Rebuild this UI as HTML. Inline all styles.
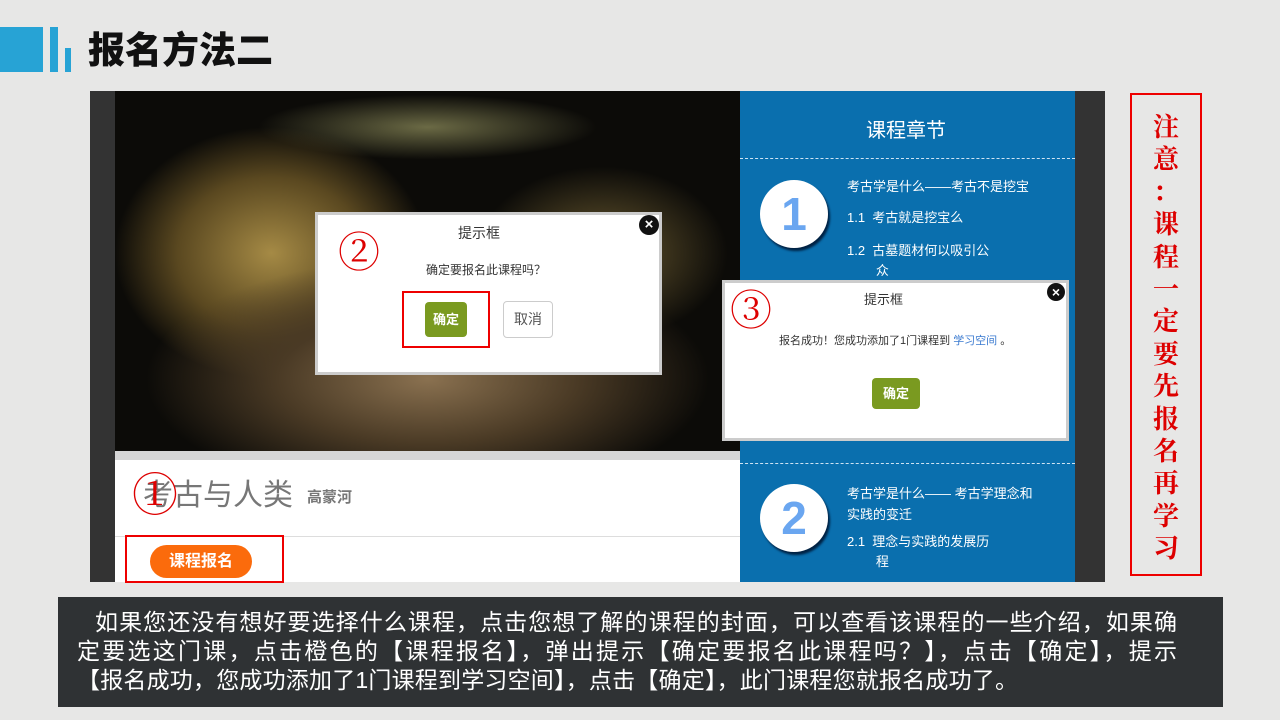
<!DOCTYPE html>
<html><head><meta charset="utf-8"><style>
*{margin:0;padding:0;box-sizing:border-box}
body{width:1280px;height:720px;background:#e7e7e6;position:relative;overflow:hidden;font-family:"Liberation Sans","Noto Sans CJK SC",sans-serif}
.a{position:absolute}
.c{font-family:"Noto Serif CJK SC",serif;color:#d00}
.l{position:absolute;font-size:23px;color:#fff;line-height:29px;white-space:nowrap;text-align:justify;text-align-last:justify}
</style></head><body>
<div class="a" style="left:0;top:27px;width:43px;height:45px;background:#27a3d5"></div>
<div class="a" style="left:50px;top:27px;width:8px;height:45px;background:#27a3d5"></div>
<div class="a" style="left:65px;top:48px;width:6px;height:24px;background:#27a3d5"></div>
<div class="a" style="left:88px;top:27px;font-size:37px;font-weight:900;color:#111;line-height:48px">报名方法二</div>

<div class="a" style="left:90px;top:91px;width:1015px;height:491px;background:#333"></div>
<div class="a" style="left:115px;top:91px;width:625px;height:360px;background:radial-gradient(ellipse 60% 45% at 50% 80%,#8a7150 0%,#4a3a25 40%,transparent 75%),radial-gradient(ellipse 25% 35% at 25% 45%,#a58a45,#5a4820 60%,transparent 100%),radial-gradient(ellipse 25% 30% at 78% 45%,#6a5a30,transparent 80%),radial-gradient(ellipse 30% 10% at 50% 10%,#6b6a45,transparent 90%),#0c0b08"></div>
<div class="a" style="left:115px;top:451px;width:625px;height:9px;background:#d6d6d6"></div>
<div class="a" style="left:115px;top:460px;width:625px;height:122px;background:#fff"></div>
<div class="a" style="left:115px;top:536px;width:625px;height:1px;background:#ddd"></div>
<div class="a" style="left:143px;top:470px;font-size:30px;color:#777">考古与人类</div>
<div class="a" style="left:307px;top:486px;font-size:15px;color:#777;font-weight:bold">高蒙河</div>
<div class="a c" style="left:132px;top:466px;font-size:46px;line-height:52px">①</div>
<div class="a" style="left:150px;top:545px;width:102px;height:33px;border-radius:17px;background:#fb6b0c;color:#fff;font-weight:bold;font-size:16px;text-align:center;line-height:33px">课程报名</div>
<div class="a" style="left:125px;top:535px;width:159px;height:48px;border:2px solid #e00"></div>

<div class="a" style="left:740px;top:91px;width:335px;height:491px;background:#0a6fae"></div>
<div class="a" style="left:866px;top:114px;font-size:20px;color:#fff">课程章节</div>
<div class="a" style="left:740px;top:158px;width:335px;border-top:1px dashed #cfe3f3"></div>
<div class="a" style="left:740px;top:463px;width:335px;border-top:1px dashed #cfe3f3"></div>
<div class="a" style="left:760px;top:180px;width:68px;height:68px;border-radius:50%;background:#fff;box-shadow:2px 3px 2px #024;color:#6aa6f0;font-size:46px;font-weight:bold;text-align:center;line-height:68px">1</div>
<div class="a" style="left:760px;top:484px;width:68px;height:68px;border-radius:50%;background:#fff;box-shadow:2px 3px 2px #024;color:#6aa6f0;font-size:46px;font-weight:bold;text-align:center;line-height:68px">2</div>
<div class="a" style="left:847px;top:178px;font-size:13px;color:#fff;line-height:18px">考古学是什么——考古不是挖宝</div>
<div class="a" style="left:847px;top:207px;font-size:13px;color:#fff">1.1&nbsp;&nbsp;考古就是挖宝么</div>
<div class="a" style="left:847px;top:241px;font-size:13px;color:#fff;line-height:20px">1.2&nbsp;&nbsp;古墓题材何以吸引公<br>&nbsp;&nbsp;&nbsp;&nbsp;&nbsp;&nbsp;&nbsp;&nbsp;众</div>
<div class="a" style="left:847px;top:483px;font-size:13px;color:#fff;line-height:21px">考古学是什么—— 考古学理念和<br>实践的变迁</div>
<div class="a" style="left:847px;top:532px;font-size:13px;color:#fff;line-height:20px">2.1&nbsp;&nbsp;理念与实践的发展历<br>&nbsp;&nbsp;&nbsp;&nbsp;&nbsp;&nbsp;&nbsp;&nbsp;程</div>
<div class="a" style="left:1075px;top:91px;width:30px;height:491px;background:#333"></div>

<div class="a" style="left:315px;top:212px;width:347px;height:163px;background:#fff;border:3px solid #ccc"></div>
<div class="a" style="left:458px;top:223px;font-size:14px;color:#333">提示框</div>
<div class="a" style="left:639px;top:215px;width:20px;height:20px;border-radius:50%;background:#111;color:#fff;font-size:15px;font-weight:bold;text-align:center;line-height:20px">×</div>
<div class="a c" style="left:338px;top:225px;font-size:42px;line-height:50px">②</div>
<div class="a" style="left:426px;top:261px;font-size:12px;color:#333">确定要报名此课程吗？</div>
<div class="a" style="left:425px;top:302px;width:42px;height:35px;border-radius:4px;background:#7a9a20;color:#fff;font-size:13px;font-weight:bold;text-align:center;line-height:35px">确定</div>
<div class="a" style="left:503px;top:301px;width:50px;height:37px;border-radius:4px;border:1px solid #ccc;background:#fff;color:#555;font-size:14px;text-align:center;line-height:35px">取消</div>
<div class="a" style="left:402px;top:291px;width:88px;height:57px;border:2px solid #e00"></div>

<div class="a" style="left:722px;top:280px;width:347px;height:161px;background:#fff;border:3px solid #ccc"></div>
<div class="a" style="left:864px;top:289px;font-size:13px;color:#333">提示框</div>
<div class="a" style="left:1047px;top:283px;width:18px;height:18px;border-radius:50%;background:#111;color:#fff;font-size:14px;font-weight:bold;text-align:center;line-height:18px">×</div>
<div class="a c" style="left:730px;top:283px;font-size:42px;line-height:50px">③</div>
<div class="a" style="left:779px;top:332px;font-size:11px;color:#333">报名成功！您成功添加了1门课程到 <span style="color:#3a7ad0">学习空间</span> 。</div>
<div class="a" style="left:872px;top:378px;width:48px;height:31px;border-radius:4px;background:#7a9a20;color:#fff;font-size:13px;font-weight:bold;text-align:center;line-height:31px">确定</div>

<div class="a" style="left:1130px;top:93px;width:72px;height:483px;border:2px solid #e00"></div>
<div class="a c" style="left:1146px;top:110px;width:40px;font-size:26px;font-weight:bold;line-height:32.4px;text-align:center">注<br>意<br>：<br>课<br>程<br>一<br>定<br>要<br>先<br>报<br>名<br>再<br>学<br>习</div>

<div class="a" style="left:58px;top:597px;width:1165px;height:110px;background:#2f3234"></div>
<div class="l" style="left:95px;top:608px;width:1082px">如果您还没有想好要选择什么课程，点击您想了解的课程的封面，可以查看该课程的一些介绍，如果确</div>
<div class="l" style="left:77px;top:637px;width:1100px">定要选这门课，点击橙色的【课程报名】，弹出提示【确定要报名此课程吗？】，点击【确定】，提示</div>
<div class="a" style="left:77px;top:666px;font-size:23px;color:#fff;line-height:29px;white-space:nowrap;letter-spacing:0.2px">【报名成功，您成功添加了1门课程到学习空间】，点击【确定】，此门课程您就报名成功了。</div>
</body></html>
